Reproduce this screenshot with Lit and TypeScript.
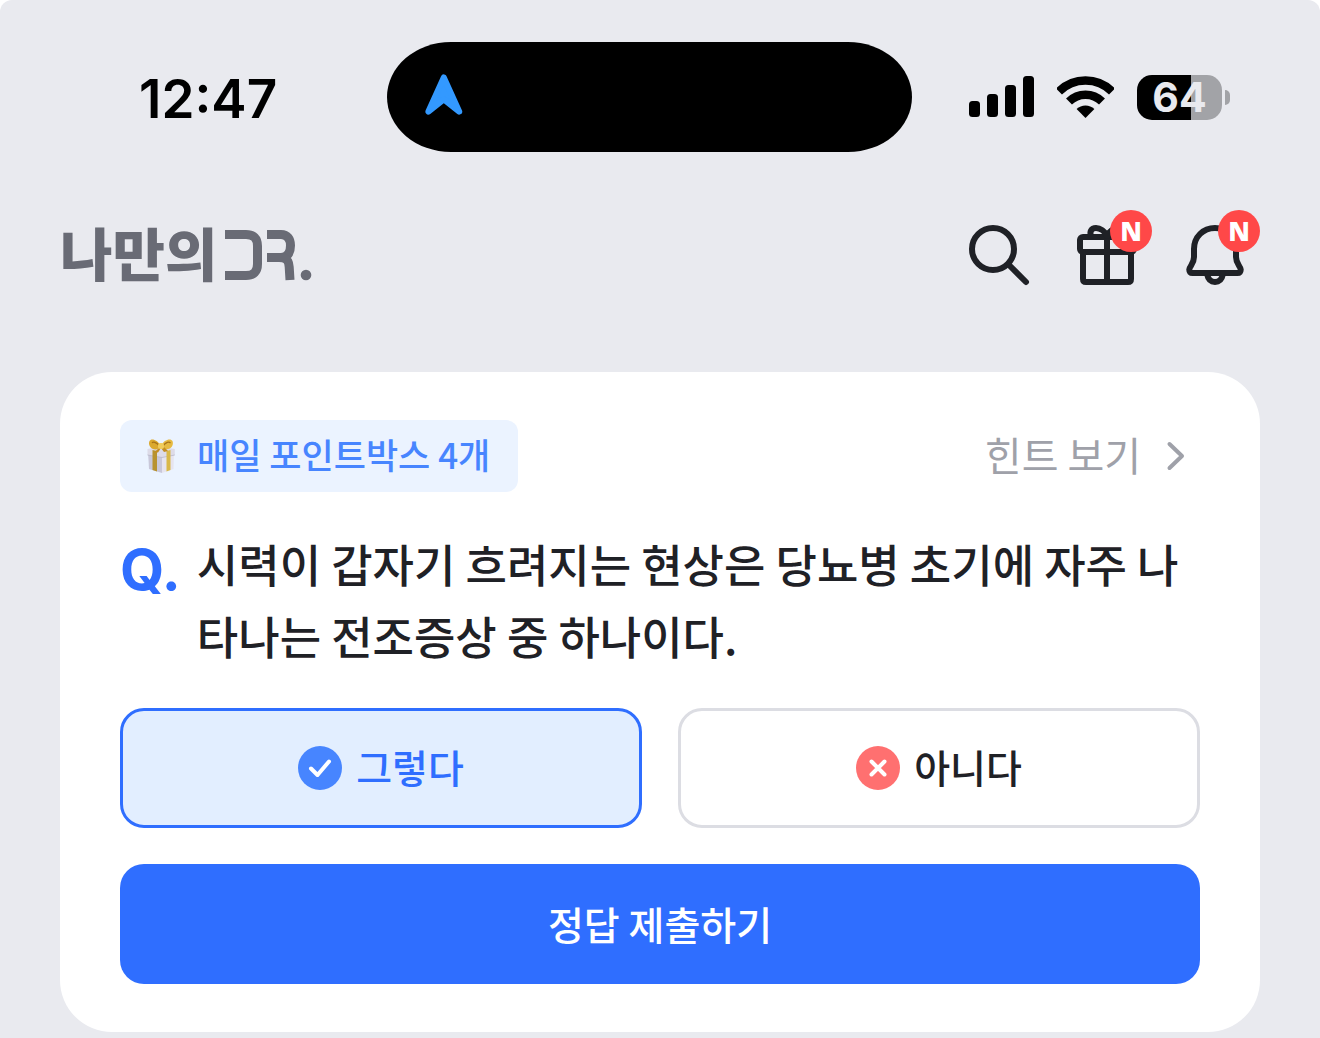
import { LitElement, html, css, svg } from "lit";
import { customElement, state } from "lit/decorators.js";
import { classMap } from "lit/directives/class-map.js";

@customElement("status-bar")
class StatusBar extends LitElement {
  static styles = css`
    :host {
      display: grid;
      grid-template-columns: 387fr 525fr 408fr;
      align-items: center;
      padding-top: 42px;
      color: #000;
      font-family: Inter, "Liberation Sans", sans-serif;
    }
    .time {
      padding: 4px 0 0 139px;
      font-size: 53px;
      line-height: 64px;
      font-weight: 600;
    }
    .island {
      display: flex;
      align-items: center;
      height: 110px;
      padding-left: 38px;
      border-radius: 64px / 55px;
      background: #000;
    }
    .island svg {
      margin-bottom: 4px;
    }
    .indicators {
      display: flex;
      align-items: center;
      justify-content: flex-end;
      padding-right: 90px;
    }
    .signal {
      margin-right: 22px;
    }
    .wifi {
      margin-right: 23px;
    }
    .battery {
      width: 85px;
      border-radius: 15px;
      background: linear-gradient(90deg, #000 54px, #a2a3a7 54px);
      color: #e9eaef;
      font-size: 41px;
      line-height: 45px;
      font-weight: 700;
      text-align: center;
    }
    .nub {
      width: 5px;
      height: 15px;
      margin-left: 3px;
      border-radius: 0 8px 8px 0;
      background: #a2a3a7;
    }
  `;

  render() {
    return html`
      <div class="time">12:47</div>
      <div class="island">
        <svg width="38" height="42" viewBox="0 0 38 42" aria-hidden="true">
          <path d="M18.8 3.4 L34.2 37.6 L18.8 25.4 L3.4 37.6Z" fill="#3399ff" stroke="#3399ff" stroke-width="6" stroke-linejoin="round" />
        </svg>
      </div>
      <div class="indicators">
        <svg class="signal" width="66" height="42" viewBox="0 0 66 42" aria-hidden="true">
          <rect x="0" y="25" width="11" height="16" rx="3.5" />
          <rect x="18" y="18" width="11" height="23" rx="3.5" />
          <rect x="36" y="9" width="11" height="32" rx="3.5" />
          <rect x="54" y="0" width="11" height="41" rx="3.5" />
        </svg>
        <svg class="wifi" width="57" height="42" viewBox="0 0 57 42" aria-hidden="true">
          <g fill="none" stroke="#000" stroke-width="8.4">
            <path d="M2 15.5 A37.5 37.5 0 0 1 55 15.5" />
            <path d="M12 25.5 A23.4 23.4 0 0 1 45 25.5" />
          </g>
          <path d="M28.5 42 L19.6 33.1 A13 13 0 0 1 37.4 33.1Z" />
        </svg>
        <div class="battery">64</div>
        <div class="nub"></div>
      </div>
    `;
  }
}

@customElement("app-header")
class AppHeader extends LitElement {
  static styles = css`
    :host {
      display: flex;
      align-items: center;
      justify-content: space-between;
      padding: 67px 69px 81px 60px;
    }
    .logo {
      display: flex;
      align-items: center;
      gap: 8px;
      color: #696b75;
      font-family: "Noto Sans CJK KR", sans-serif;
      font-size: 57px;
      line-height: 64px;
      font-weight: 900;
      text-decoration: none;
    }
    .name {
      padding-bottom: 8px;
    }
    .actions {
      display: flex;
      gap: 36px;
    }
    .action {
      position: relative;
      width: 72px;
      height: 72px;
      padding: 0;
      border: 0;
      background: none;
      cursor: pointer;
    }
    .action svg {
      display: block;
    }
    .badge {
      position: absolute;
      top: -9px;
      right: -9px;
      width: 42px;
      border-radius: 50%;
      background: #ff4848;
      color: #fff;
      font-family: "Open Sans", "Liberation Sans", sans-serif;
      font-size: 26px;
      line-height: 42px;
      font-weight: 800;
      text-align: center;
    }
  `;

  private action(label: string, shape: unknown, isNew: boolean) {
    return html`
      <button class="action" type="button" aria-label=${label}>
        <svg width="72" height="72" viewBox="0 0 72 72" fill="none" stroke="#1f2126" stroke-width="6" stroke-linecap="round" stroke-linejoin="round" aria-hidden="true">
          ${shape}
        </svg>
        ${isNew ? html`<span class="badge">N</span>` : null}
      </button>
    `;
  }

  render() {
    return html`
      <a class="logo" href="#">
        <span class="name">나만의</span>
        <svg width="88" height="56" viewBox="0 0 88 56" aria-hidden="true">
          <g fill="none" stroke="#696b75" stroke-width="9">
            <path d="M0 7.500 H21 Q32.500 7.500 32.500 19 V37 Q32.500 48.500 21 48.500 H0" />
            <path d="M42 7.500 H56 C62.500 7.500 65.500 12 65.500 18.500 C65.500 26 62.500 30.500 56 30.500 H42" />
            <path d="M54 30.500 C62 30.500 63.800 34 64.200 40 L65 53" />
          </g>
          <circle cx="81" cy="48" r="5.300" fill="#696b75" />
        </svg>
      </a>
      <div class="actions">
        ${this.action("검색", svg`
          <circle cx="30" cy="30" r="21" />
          <path d="M46 46 L63 63" />`, false)}
        ${this.action("선물", svg`
          <rect x="9" y="18" width="54" height="15" rx="3" />
          <path d="M12 33 V60 Q12 63 15 63 H57 Q60 63 60 60 V33 M36 18 V63" />
          <path d="M36 17 C34 12 29 9 25 9 C20 9 18.500 13 20 17 M36 17 C38 12 43 9 47 9 C52 9 53.500 13 52 17" />`, true)}
        ${this.action("알림", svg`
          <path d="M36 9 C24 9 15 18 15 30 V38 C15 45 10.500 47 10.300 50.500 C10.200 52.800 11.300 54 13.500 54 H58.500 C60.700 54 61.800 52.800 61.700 50.500 C61.500 47 57 45 57 38 V30 C57 18 48 9 36 9Z" />
          <path d="M28 55 C29 60 32 63 36 63 C40 63 43 60 44 55" />`, true)}
      </div>
    `;
  }
}

@customElement("quiz-card")
class QuizCard extends LitElement {
  @state() private answer = "yes";

  static styles = css`
    :host {
      display: flex;
      flex-direction: column;
      gap: 36px;
      padding: 48px 60px;
      border-radius: 52px;
      background: #fff;
      color: #1f2126;
      font-family: "Noto Sans CJK KR", sans-serif;
      font-weight: 500;
    }
    button {
      font: inherit;
      cursor: pointer;
    }
    .top {
      display: flex;
      align-items: center;
      justify-content: space-between;
    }
    .chip {
      display: flex;
      align-items: center;
      gap: 21px;
      padding: 0 28px 0 26px;
      border-radius: 12px;
      background: #ebf3ff;
      color: #4785ff;
      font-size: 35px;
      line-height: 68px;
    }
    .label {
      padding-bottom: 4px;
    }
    .hint {
      display: flex;
      align-items: center;
      gap: 11px;
      color: #9fa1a9;
      font-size: 40px;
      line-height: 68px;
      text-decoration: none;
      font-weight: 400;
    }
    .question {
      display: flex;
      gap: 16px;
      margin: 0;
      font-size: 45px;
      line-height: 72px;
      font-weight: 500;
    }
    .mark {
      padding-top: 6px;
      color: #2f6eff;
      font-family: Inter, "Liberation Sans", sans-serif;
      font-size: 57px;
      font-weight: 700;
    }
    .answers {
      display: grid;
      grid-template-columns: 1fr 1fr;
      gap: 36px;
    }
    .answer {
      display: flex;
      align-items: center;
      justify-content: center;
      gap: 14px;
      height: 120px;
      border: 3px solid #dcdde3;
      border-radius: 24px;
      background: #fff;
      color: #1f2126;
      font-size: 39px;
    }
    .answer.selected {
      border-color: #2f6eff;
      background: #e2eeff;
      color: #2f6eff;
    }
    .submit {
      height: 120px;
      padding-bottom: 4px;
      border: 0;
      border-radius: 24px;
      background: #2f6eff;
      color: #fff;
      font-size: 39px;
    }
  `;

  private option(value: string, label: string, color: string, mark: string) {
    const selected = this.answer === value;
    return html`
      <button
        type="button"
        class=${classMap({ answer: true, selected })}
        aria-pressed=${selected ? "true" : "false"}
        @click=${() => (this.answer = value)}
      >
        <svg width="44" height="44" viewBox="0 0 44 44" aria-hidden="true">
          <circle cx="22" cy="22" r="22" fill=${color} />
          <path d=${mark} fill="none" stroke="#fff" stroke-width="4" stroke-linecap="round" stroke-linejoin="round" />
        </svg>
        <span class="label">${label}</span>
      </button>
    `;
  }

  render() {
    return html`
      <div class="top">
        <div class="chip">
          <svg width="30" height="36" viewBox="0 0 30 36" aria-hidden="true">
            <path d="M2 13 L16 16 V35 L3 31Z" fill="#c9c8da" />
            <path d="M16 16 L28 12 L27.500 31 L16 35Z" fill="#e6e4ef" />
            <path d="M1.500 11 L14 8.500 L28.800 11 V17 L16 19.500 L1.500 17Z" fill="#dddbe8" />
            <path d="M1.500 17 L16 19.500 L28.800 17" fill="none" stroke="#b5b3c6" stroke-width="0.700" />
            <path d="M6.500 12 L11 13 V33.500 L6.500 32Z" fill="#b8922f" />
            <path d="M20.500 13 L24.500 12 V32 L20.500 33.500Z" fill="#d9b848" />
            <path d="M15 8 C11 1 5 0 3.500 3 C2 6 4 10 7 11 C10 12 13 11 15 8Z" fill="#dba92f" />
            <path d="M15 8 C18 1 25 0 26.500 3 C28 7 25 11 22 11 C19 12 17 11 15 8Z" fill="#e6ba42" />
            <path d="M13.500 8 C10 4 7 3.500 6 5 M17 8 C20 4 23 3.500 24.500 5" fill="none" stroke="#a87418" stroke-width="1.200" />
            <path d="M13 10 L8 14.500 L12 14.500 L15 10 L18 14 L22 13 L18 9Z" fill="#c48d22" />
            <rect x="12" y="5" width="6" height="6" rx="2.500" fill="#f0cc5c" />
          </svg>
          <span class="label">매일 포인트박스 4개</span>
        </div>
        <a class="hint" href="#">
          <span class="label">힌트 보기</span>
          <svg width="48" height="36" viewBox="0 0 48 36" fill="none" stroke="#9fa1a9" stroke-width="4" stroke-linecap="round" stroke-linejoin="round" aria-hidden="true">
            <path d="M17.500 6 L30 18 L17.500 30" />
          </svg>
        </a>
      </div>
      <h1 class="question">
        <span class="mark">Q.</span>
        <span>시력이 갑자기 흐려지는 현상은 당뇨병 초기에 자주 나타나는 전조증상 중 하나이다.</span>
      </h1>
      <div class="answers">
        ${this.option("yes", "그렇다", "#4785ff", "M13 22.500 L19.500 29 L31 15.500")}
        ${this.option("no", "아니다", "#ff7070", "M15.500 15.500 L28.500 28.500 M28.500 15.500 L15.500 28.500")}
      </div>
      <button class="submit" type="button">정답 제출하기</button>
    `;
  }
}

@customElement("app-root")
class AppRoot extends LitElement {
  static styles = css`
    :host {
      display: block;
      background: #fff;
    }
    .screen {
      display: flex;
      flex-direction: column;
      box-sizing: border-box;
      min-height: 100vh;
      padding-bottom: 6px;
      border-radius: 12px 12px 0 0;
      background: #e9eaef;
    }
    .content {
      padding: 0 60px;
    }
  `;

  render() {
    return html`
      <div class="screen">
        <status-bar></status-bar>
        <app-header></app-header>
        <main class="content"><quiz-card></quiz-card></main>
      </div>
    `;
  }
}
